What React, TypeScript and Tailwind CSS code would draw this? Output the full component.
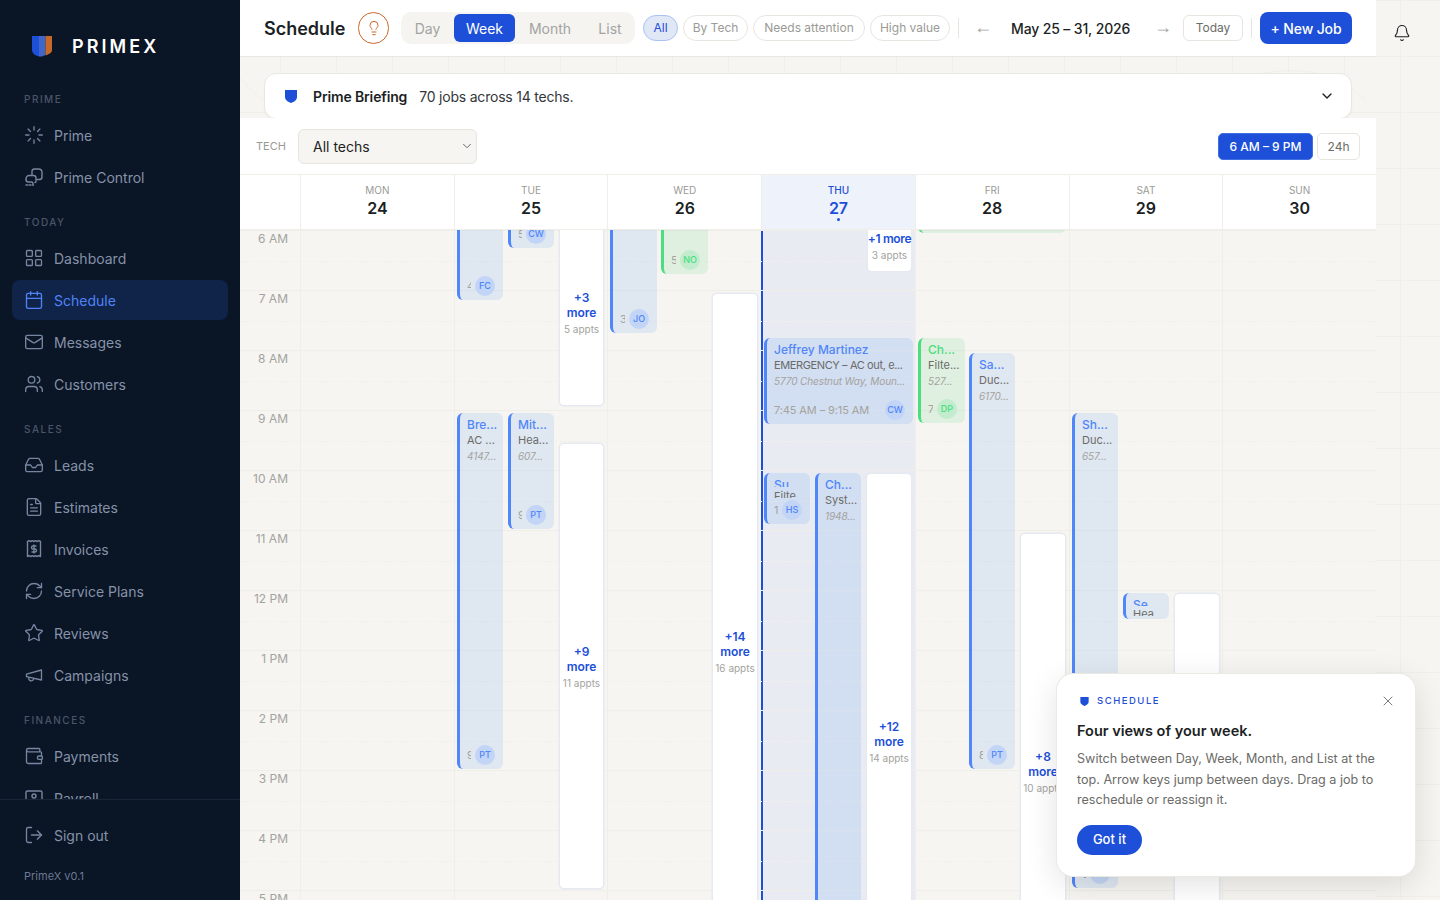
import {
  Bell,
  Calendar,
  ChevronDown,
  FileText,
  Inbox,
  LayoutGrid,
  Lightbulb,
  Loader,
  LogOut,
  Mail,
  RefreshCw,
  Star,
  Users,
  Wallet,
  X,
} from "lucide-react";
import type { ReactNode } from "react";

const font = { fontFamily: "Inter, 'Liberation Sans', sans-serif" };

function PrimeControlIcon() {
  return (
    <svg width="20" height="20" viewBox="0 0 20 20" fill="none" stroke="currentColor" strokeWidth="1.4" strokeLinecap="round" strokeLinejoin="round">
      <path d="M8 8V4.500C8 3 9 2 10.500 2h4C16.500 2 18 3.500 18 5.500V10c0 1.500-1 2.500-2.500 2.500H13" />
      <path d="M2 12c0-2 1.500-3.500 3-3.500h4.500c1.500 0 2.500 1 2.500 2.500v3c0 1-.5 1.500-1 1.500" />
      <path d="M2 12.500c0 1.500 1 2.500 2.500 2.500h3c1 0 1.500 1 1.500 2" />
      <path d="M2 18h8.500" strokeDasharray="1.500 1.500" />
    </svg>
  );
}

function ReceiptIcon() {
  return (
    <svg width="20" height="20" viewBox="0 0 20 20" fill="none" stroke="currentColor" strokeWidth="1.4" strokeLinejoin="round">
      <path d="M3.500 2.500l1.600-.8 1.700.8 1.600-.8 1.600.8 1.600-.8 1.600.8 1.700-.8 1.600.8v15l-1.600-.8-1.700.8-1.600-.8-1.600.8-1.600-.8-1.600.8-1.700-.8-1.600.8z" />
      <path d="M12.500 7H9a1.500 1.500 0 0 0 0 3h2a1.500 1.500 0 0 1 0 3H7.500M10 5.500v9" />
    </svg>
  );
}

function PayrollIcon() {
  return (
    <svg width="20" height="20" viewBox="0 0 20 20" fill="none" stroke="currentColor" strokeWidth="1.4" strokeLinejoin="round">
      <rect x="2" y="3" width="16" height="14" rx="1.500" />
      <circle cx="10" cy="8" r="2" />
    </svg>
  );
}

function MegaphoneIcon() {
  return (
    <svg width="20" height="20" viewBox="0 0 24 24" fill="none" stroke="currentColor" strokeWidth="1.6" strokeLinecap="round" strokeLinejoin="round">
      <path d="m3 11 18-5v12L3 14v-3z" />
      <path d="M11.600 16.800a3 3 0 1 1-5.800-1.600" />
    </svg>
  );
}

function Logo() {
  return (
    <svg width="20" height="21" viewBox="0 0 20 21">
      <path d="M0 0h7v20.500C3 19.500 0 17.500 0 14z" fill="#1d4fd8" />
      <path d="M7 0h6.500v19L10 20.500 7 20.500z" fill="#3f66c9" />
      <path d="M13.500 0H20v14c0 2.500-2.500 4-6.500 5.500z" fill="#c8692a" />
    </svg>
  );
}

function Shield({ className }: { className: string }) {
  return (
    <svg className={className} viewBox="0 0 12 13" fill="currentColor">
      <path d="M0 0h12v7c0 3-3 5-6 6-3-1-6-3-6-6z" />
    </svg>
  );
}

type NavItem = { label: string; icon: ReactNode; active?: boolean };

const s = { size: 20, strokeWidth: 1.6 };

const navGroups: { title: string; items: NavItem[] }[] = [
  {
    title: "PRIME",
    items: [
      { label: "Prime", icon: <Loader {...s} /> },
      { label: "Prime Control", icon: <PrimeControlIcon /> },
    ],
  },
  {
    title: "TODAY",
    items: [
      { label: "Dashboard", icon: <LayoutGrid {...s} /> },
      { label: "Schedule", icon: <Calendar {...s} />, active: true },
      { label: "Messages", icon: <Mail {...s} /> },
      { label: "Customers", icon: <Users {...s} /> },
    ],
  },
  {
    title: "SALES",
    items: [
      { label: "Leads", icon: <Inbox {...s} /> },
      { label: "Estimates", icon: <FileText {...s} /> },
      { label: "Invoices", icon: <ReceiptIcon /> },
      { label: "Service Plans", icon: <RefreshCw {...s} /> },
      { label: "Reviews", icon: <Star {...s} /> },
      { label: "Campaigns", icon: <MegaphoneIcon /> },
    ],
  },
  {
    title: "FINANCES",
    items: [
      { label: "Payments", icon: <Wallet {...s} /> },
      { label: "Payroll", icon: <PayrollIcon /> },
    ],
  },
];

function Sidebar() {
  return (
    <aside className="flex h-[900px] w-[240px] shrink-0 flex-col bg-[#0a1526]">
      <div className="flex h-[91px] shrink-0 items-center gap-[20px] pl-[32px] pt-[2px]">
        <Logo />
        <span className="text-[18px] font-semibold tracking-[0.17em] text-white">PRIMEX</span>
      </div>
      <nav className="min-h-0 flex-1 overflow-hidden px-[12px]">
        {navGroups.map((group) => (
          <div key={group.title} className="mb-[17px]">
            <div className="flex h-[16px] items-center pl-[12px] text-[10px] font-medium tracking-[0.15em] text-[#4a5568]">
              {group.title}
            </div>
            <div className="mt-[8px]">
              {group.items.map((item) => (
                <div
                  key={item.label}
                  className={`mb-[2px] flex h-[40px] items-center gap-[10px] rounded-[8px] pl-[12px] text-[14px] ${
                    item.active ? "bg-[#10244a] text-[#4f83f5]" : "text-[#8592a8]"
                  }`}
                >
                  <span className={item.active ? "text-[#4f83f5]" : "text-[#7786a0]"}>{item.icon}</span>
                  {item.label}
                </div>
              ))}
            </div>
          </div>
        ))}
      </nav>
      <div className="h-[101px] shrink-0 border-t border-[#1a2637] px-[24px]">
        <div className="mt-[15px] flex h-[40px] items-center gap-[10px] text-[14px] text-[#8592a8]">
          <LogOut {...s} className="text-[#7786a0]" />
          Sign out
        </div>
        <div className="mt-[13px] text-[11px] text-[#6b7a92]">PrimeX v0.1</div>
      </div>
    </aside>
  );
}

function Pill({ label, active, width }: { label: string; active?: boolean; width: string }) {
  return (
    <span
      className={`flex h-[26px] items-center justify-center rounded-full border text-[12px] ${width} ${
        active
          ? "border-[#a9c2f5] bg-[#e1e8f5] text-[#1d4fd8]"
          : "border-[#e7e5df] bg-white text-[#9a9a96]"
      }`}
    >
      {label}
    </span>
  );
}

function Header() {
  return (
    <header className="flex h-[57px] shrink-0 items-center border-b border-[#e9e7e1] bg-white pl-[24px]">
      <h1 className="w-[82px] whitespace-nowrap text-[18px] font-semibold text-[#1c1f24]">Schedule</h1>
      <span className="ml-[12px] flex h-[32px] w-[31px] items-center justify-center rounded-full border border-[#c8692a] text-[#c8692a]">
        <Lightbulb size={16} strokeWidth={1.5} />
      </span>
      <div className="ml-[12px] flex h-[32px] items-center rounded-[10px] bg-[#f5f4f1] text-[14px] text-[#a3a3a0]">
        <span className="w-[53px] text-center">Day</span>
        <span className="flex h-[28px] w-[61px] items-center justify-center rounded-[6px] bg-[#1d4fd8] text-white">Week</span>
        <span className="w-[70px] text-center">Month</span>
        <span className="w-[50px] text-center">List</span>
      </div>
      <div className="ml-[8px] flex items-center gap-[5px]">
        <Pill label="All" active width="w-[35px]" />
        <Pill label="By Tech" width="w-[65px]" />
        <Pill label="Needs attention" width="w-[112px]" />
        <Pill label="High value" width="w-[80px]" />
      </div>
      <span className="ml-[8px] h-[20px] w-px bg-[#e7e5df]" />
      <span className="ml-[15px] mt-[-2px] w-[14px] text-center font-['Liberation_Sans'] text-[18px] leading-none text-[#a3a3a0]">←</span>
      <span className="ml-[23px] w-[119px] whitespace-nowrap text-center text-[14px] font-medium tracking-[-0.01em] text-[#1c1f24]">May 25 – 31, 2026</span>
      <span className="ml-[24px] mt-[-2px] w-[14px] text-center font-['Liberation_Sans'] text-[18px] leading-none text-[#a3a3a0]">→</span>
      <span className="ml-[15px] flex h-[26px] w-[60px] items-center justify-center rounded-[6px] border border-[#e7e5df] text-[12px] text-[#6b6b68]">
        Today
      </span>
      <span className="ml-[8px] h-[20px] w-px bg-[#e7e5df]" />
      <span className="ml-[8px] flex h-[32px] w-[92px] items-center justify-center rounded-[8px] bg-[#1d4fd8] text-[14px] font-medium tracking-[-0.01em] text-white">
        + New Job
      </span>
    </header>
  );
}

function Briefing() {
  return (
    <div className="relative flex h-[61px] shrink-0 items-start px-[24px] pt-[16px]">
      <svg className="absolute left-0 top-0 h-[61px] w-[1136px]" viewBox="0 0 1136 61" fill="none" stroke="#f0efea">
        <path d="M0 21l22 23" />
        <path d="M992 23c50-14 100-16 133 20" />
      </svg>
      <div className="relative flex h-[46px] w-full items-center rounded-[12px] border border-[#e9e7e1] bg-white pl-[20px] pr-[16px] shadow-[0_1px_2px_rgba(0,0,0,0.04)]">
        <Shield className="h-[13px] w-[12px] text-[#1d4fd8]" />
        <span className="ml-[16px] text-[14px] font-semibold tracking-[-0.01em] text-[#1c1f24]">Prime Briefing</span>
        <span className="ml-[12px] text-[14px] tracking-[-0.015em] text-[#33363b]">70 jobs across 14 techs.</span>
        <ChevronDown size={16} strokeWidth={2} className="ml-auto text-[#1c1f24]" />
      </div>
    </div>
  );
}

function Toolbar() {
  return (
    <div className="relative flex h-[56px] shrink-0 items-center bg-white pl-[16px] pr-[16px]">
      <span className="w-[30px] text-[11px] text-[#9a9a96]">TECH</span>
      <div className="ml-[12px] flex h-[35px] w-[179px] items-center justify-between rounded-[6px] border border-[#e7e5df] bg-[#f6f5f1] pl-[14px] pr-[2px] text-[14px] text-[#1c1f24]">
        All techs
        <ChevronDown size={14} strokeWidth={1.5} className="text-[#55585c]" />
      </div>
      <div className="ml-auto mt-[1px] flex items-center gap-[4px]">
        <span className="flex h-[27px] w-[95px] items-center justify-center rounded-[5px] border border-[#3f6fe0] bg-[#1d4fd8] text-[12px] font-medium text-white">
          6 AM – 9 PM
        </span>
        <span className="flex h-[27px] w-[43px] items-center justify-center rounded-[5px] border border-[#e7e5df] text-[12px] text-[#6b6b68]">
          24h
        </span>
      </div>
    </div>
  );
}

const days = [
  { name: "MON", num: 24 },
  { name: "TUE", num: 25 },
  { name: "WED", num: 26 },
  { name: "THU", num: 27, today: true },
  { name: "FRI", num: 28 },
  { name: "SAT", num: 29 },
  { name: "SUN", num: 30 },
];

const hours = ["6 AM", "7 AM", "8 AM", "9 AM", "10 AM", "11 AM", "12 PM", "1 PM", "2 PM", "3 PM", "4 PM", "5 PM"];

function DayHeader() {
  return (
    <div className="grid h-[56px] shrink-0 grid-cols-[60px_repeat(7,1fr)] border-y border-[#efeee9] bg-white">
      <div />
      {days.map((d) => (
        <div
          key={d.name}
          className={`relative flex flex-col items-center border-l border-[#efeee9] pt-[9px] ${d.today ? "bg-[#eef2fb]" : ""}`}
        >
          <span className={`text-[10px] leading-[13px] ${d.today ? "font-medium text-[#1d4fd8]" : "text-[#9a9a96]"}`}>{d.name}</span>
          <span className={`text-[16px] font-semibold leading-[22px] ${d.today ? "text-[#1d4fd8]" : "text-[#1c1f24]"}`}>{d.num}</span>
          {d.today && <span className="absolute top-[43px] h-[3px] w-[3px] rounded-full bg-[#1d4fd8]" />}
        </div>
      ))}
    </div>
  );
}

type Job = {
  left: number;
  top: number;
  width: number;
  height: number;
  color?: "blue" | "green";
  name?: string;
  job?: string;
  addr?: string;
  time?: string;
  tech?: string;
  nameClip?: string;
  jobClip?: string;
};

type More = { left: number; top: number; height: number; width?: number; title: string; sub: string; textTop: number; nowrap?: boolean };

// coordinates are relative to the grid body (page x - 240, page y - 230)
const jobs: Job[] = [
  { left: 217, top: -60, width: 46, height: 130, time: "4", tech: "FC" },
  { left: 268, top: -60, width: 46, height: 78, time: "5", tech: "CW" },
  { left: 217, top: 183, width: 46, height: 356, name: "Bre...", job: "AC ...", addr: "4147...", time: "9", tech: "PT" },
  { left: 268, top: 183, width: 46, height: 116, name: "Mit...", job: "Hea...", addr: "607...", time: "9", tech: "PT" },
  { left: 370, top: -60, width: 47, height: 163, time: "3", tech: "JO" },
  { left: 421, top: -60, width: 47, height: 104, color: "green", time: "5", tech: "NO" },
  { left: 524, top: 108, width: 149, height: 86, name: "Jeffrey Martinez", job: "EMERGENCY – AC out, e...", addr: "5770 Chestnut Way, Moun...", time: "7:45 AM – 9:15 AM", tech: "CW" },
  // the two short cards squeeze their lines, so each line is cut mid glyph
  { left: 524, top: 243, width: 46, height: 51, name: "Su", job: "Filte", time: "1", tech: "HS", nameClip: "h-[11px]", jobClip: "mt-[2px] h-[9px]" },
  { left: 575, top: 243, width: 46, height: 720, name: "Ch...", job: "Syst...", addr: "1948..." },
  { left: 678, top: -60, width: 148, height: 63, color: "green" },
  { left: 678, top: 108, width: 47, height: 85, color: "green", name: "Ch...", job: "Filte...", addr: "527...", time: "7", tech: "DP" },
  { left: 729, top: 123, width: 46, height: 416, name: "Sa...", job: "Duc...", addr: "6170...", time: "8", tech: "PT" },
  { left: 832, top: 183, width: 46, height: 475, name: "Sh...", job: "Duc...", addr: "657...", time: "9", tech: "PT" },
  { left: 883, top: 363, width: 46, height: 26, name: "Se", job: "Hea", nameClip: "h-[10px]", jobClip: "mt-[1px] h-[9px]" },
];

const mores: More[] = [
  { left: 320, top: -60, width: 43, height: 235, title: "+3 more", sub: "5 appts", textTop: 120 },
  { left: 320, top: 214, width: 43, height: 444, title: "+9 more", sub: "11 appts", textTop: 200 },
  { left: 473, top: 64, width: 44, height: 800, title: "+14 more", sub: "16 appts", textTop: 335 },
  { left: 628, top: -60, width: 43, height: 101, title: "+1 more", sub: "3 appts", textTop: 61, nowrap: true },
  { left: 627, top: 244, width: 44, height: 800, title: "+12 more", sub: "14 appts", textTop: 245 },
  { left: 781, top: 304, width: 44, height: 800, title: "+8 more", sub: "10 appts", textTop: 215 },
  { left: 935, top: 364, width: 44, height: 800, title: "", sub: "", textTop: 0 },
];

function JobCard({ job }: { job: Job }) {
  const green = job.color === "green";
  return (
    <div
      className={`absolute overflow-hidden rounded-[6px] border-l-[3px] ${
        green ? "border-[#4ade80] bg-[#22c55e]/11" : "border-[#4f86fa] bg-[#3b82f6]/12"
      }`}
      style={{ left: job.left, top: job.top, width: job.width, height: job.height }}
    >
      <div className="pl-[7px] pt-[3px]">
        {job.name && (
          <div
            className={`overflow-hidden whitespace-nowrap text-[12px] font-medium leading-[17px] ${job.nameClip ?? ""} ${
              green ? "text-[#4ade80]" : "text-[#4f86fa]"
            }`}
          >
            {job.name}
          </div>
        )}
        {job.job && (
          <div
            className={`overflow-hidden whitespace-nowrap text-[11px] leading-[15px] text-[#6b6b68] ${job.jobClip ?? ""} ${
              job.width > 100 ? "tracking-[-0.035em]" : ""
            }`}
          >
            {job.job}
          </div>
        )}
        {job.addr && <div className="overflow-hidden whitespace-nowrap text-[10px] italic leading-[16px] tracking-[-0.01em] text-[#a3a3a0]">{job.addr}</div>}
      </div>
      {job.time && (
        <div className="absolute bottom-[4px] left-[7px] right-[8px] flex h-[20px] items-center gap-[4px]">
          <span className="min-w-0 flex-1 overflow-hidden whitespace-nowrap text-[11px] tracking-[-0.01em] text-[#a3a3a0]">{job.time}</span>
          {job.tech && (
            <span
              className={`flex h-[20px] w-[20px] shrink-0 items-center justify-center rounded-full text-[9px] font-medium ${
                green ? "bg-[#c2eccd] text-[#4ade80]" : "bg-[#c3d5f6] text-[#4f86fa]"
              }`}
            >
              {job.tech}
            </span>
          )}
        </div>
      )}
    </div>
  );
}

function MoreCard({ m }: { m: More }) {
  return (
    <div
      className="absolute rounded-[4px] bg-white shadow-[0_0_0_1.5px_#e6e9f1]"
      style={{ left: m.left, top: m.top, width: m.width, height: m.height }}
    >
      {m.title && (
        <div className="absolute inset-x-0 flex flex-col items-center text-center" style={{ top: m.textTop }}>
          <div className={`text-[12px] font-semibold leading-[15px] text-[#1d4fd8] ${m.nowrap ? "whitespace-nowrap tracking-[-0.03em]" : ""}`}>{m.title}</div>
          <div className="mt-[3px] whitespace-nowrap text-[10px] leading-[13px] text-[#a3a3a0]">{m.sub}</div>
        </div>
      )}
    </div>
  );
}

function CalendarBody() {
  return (
    <div className="relative min-h-0 flex-1 overflow-hidden bg-[#f6f5f1]">
      <div className="absolute inset-y-0 left-[60px] right-0 grid grid-cols-7">
        {days.map((d) => (
          <div key={d.name} className={`border-l border-[#efeee9] ${d.today ? "border-l-2 border-l-[#1d4fd8] bg-[#e8ebf1]" : ""}`} />
        ))}
      </div>
      {hours.map((h) => (
        <div key={h} className="relative h-[60px] border-t border-[#efeee9]">
          <div className="absolute inset-x-0 top-[30px] border-t border-dashed border-[#f1f0ec]" />
          <span className="absolute right-[1088px] top-[-1px] whitespace-nowrap text-[12px] text-[#a3a3a0]">{h}</span>
        </div>
      ))}
      {jobs.map((j, i) => (
        <JobCard key={i} job={j} />
      ))}
      {mores.map((m, i) => (
        <MoreCard key={i} m={m} />
      ))}
    </div>
  );
}

function Popup() {
  return (
    <div className="absolute left-[1057px] top-[674px] z-20 h-[202px] w-[358px] rounded-[16px] bg-white px-[20px] pt-[20px] shadow-[0_0_0_1px_#ebe9e4,0_8px_32px_rgba(0,0,0,0.12)]">
      <div className="flex h-[14px] items-center pt-[1px]">
        <Shield className="ml-[3px] h-[9px] w-[9px] text-[#1d4fd8]" />
        <span className="ml-[8px] text-[9.500px] font-medium tracking-[0.16em] text-[#1d4fd8]">SCHEDULE</span>
        <X size={16} strokeWidth={1.5} className="ml-auto mr-[-1px] mt-[-1px] text-[#7a7a78]" />
      </div>
      <div className="mt-[13px] text-[14.500px] font-semibold leading-[20px] text-[#1c1f24]">Four views of your week.</div>
      <p className="mt-[8px] text-[12.600px] leading-[20.500px] text-[#6b6b68]">
        Switch between Day, Week, Month, and List at the top. Arrow keys jump between days. Drag a job to reschedule or reassign it.
      </p>
      <span className="mt-[14px] flex h-[30px] w-[65px] items-center justify-center rounded-full bg-[#1d4fd8] text-[13px] font-medium text-white">
        Got it
      </span>
    </div>
  );
}

export default function App() {
  return (
    <div
      className="relative flex h-[900px] w-[1440px] overflow-hidden bg-[#f6f5f1] bg-[linear-gradient(to_right,#f0efea_1px,transparent_1px),linear-gradient(to_bottom,#f0efea_1px,transparent_1px)] bg-[length:56px_56px]"
      style={font}
    >
      <Sidebar />
      <main className="flex h-full w-[1136px] shrink-0 flex-col">
        <Header />
        <Briefing />
        <Toolbar />
        <DayHeader />
        <CalendarBody />
      </main>
      <div className="w-[64px] shrink-0 pl-[17px] pt-[24px]">
        <Bell size={18} strokeWidth={1.5} className="text-[#1c1f24]" />
      </div>
      <Popup />
    </div>
  );
}
